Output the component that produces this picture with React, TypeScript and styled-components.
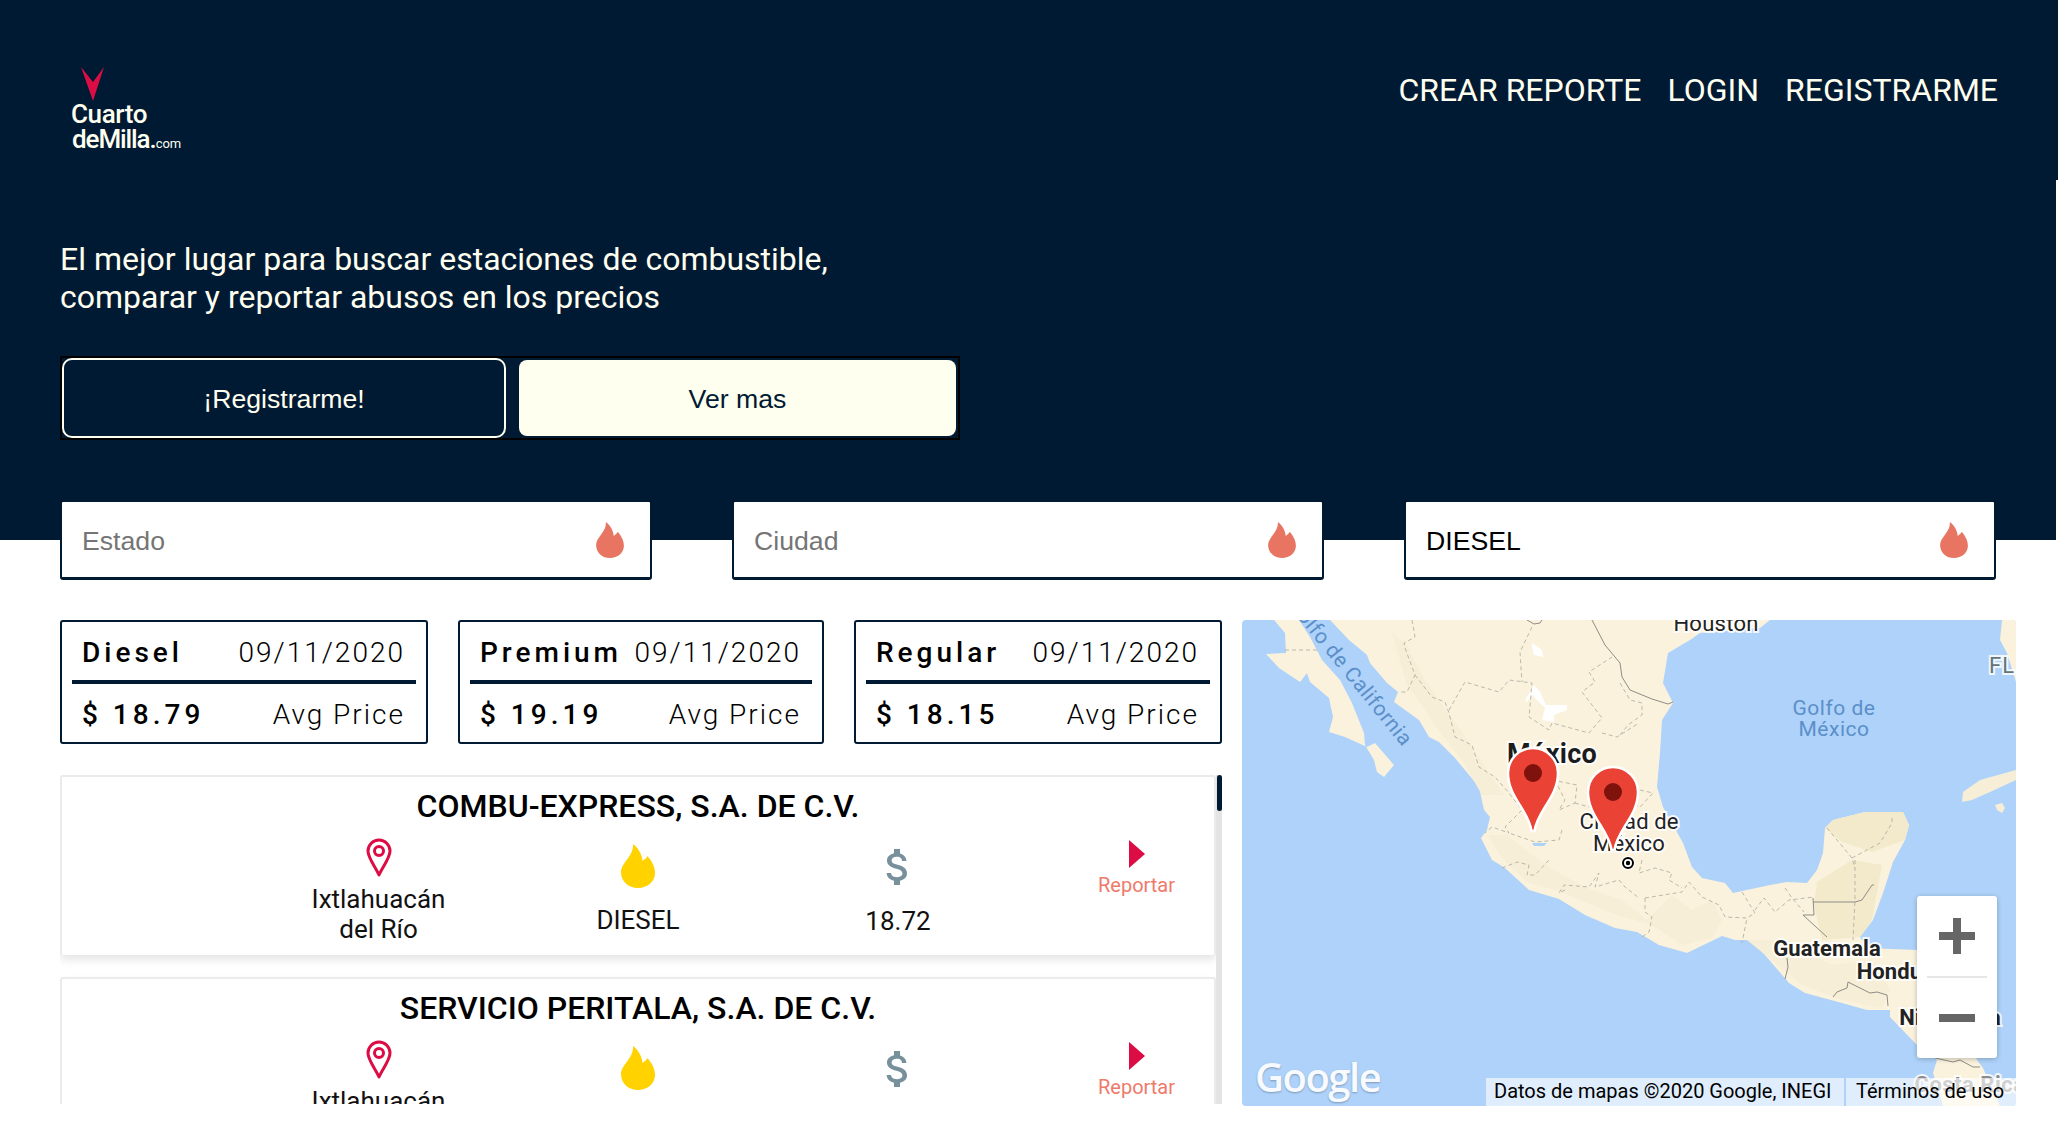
import styled, { createGlobalStyle } from "styled-components";
import { MdAttachMoney } from "react-icons/md";

const NAVY = "#011a33";
const IVORY = "#fffff0";
const CRIMSON = "#dc0d45";

const prices = [
  { name: "Diesel", date: "09/11/2020", price: "$ 18.79" },
  { name: "Premium", date: "09/11/2020", price: "$ 19.19" },
  { name: "Regular", date: "09/11/2020", price: "$ 18.15" },
];

const stations = [
  { name: "COMBU-EXPRESS, S.A. DE C.V.", city: "Ixtlahuacán del Río", fuel: "DIESEL", price: "18.72" },
  { name: "SERVICIO PERITALA, S.A. DE C.V.", city: "Ixtlahuacán del Río", fuel: "DIESEL", price: "18.72" },
];

const mapLabels = [
  { text: "Golfo de California", x: 108, y: 52, size: 21, weight: 400, color: "#5b8fc9", rotate: 51, halo: false, spacing: 0.5 },
  { text: "Houston", x: 474, y: 4, size: 22, weight: 400, color: "#222", rotate: 0, halo: true, spacing: 0.25 },
  { text: "FL", x: 760, y: 46, size: 22, weight: 400, color: "#63757a", rotate: 0, halo: true, spacing: 1 },
  { text: "Golfo de\nMéxico", x: 592, y: 99, size: 21, weight: 400, color: "#5b8fc9", rotate: 0, halo: false, spacing: 0.5 },
  { text: "México", x: 310, y: 134, size: 27, weight: 700, color: "#1c1c1c", rotate: 0, halo: true, spacing: 0.3 },
  { text: "Ciudad de\nMéxico", x: 387, y: 213, size: 22, weight: 400, color: "#222", rotate: 0, halo: true, spacing: 0.1 },
  { text: "Guatemala", x: 585, y: 329, size: 22, weight: 700, color: "#222", rotate: 0, halo: true, spacing: 0.1 },
  { text: "Honduras", x: 663, y: 352, size: 22, weight: 700, color: "#222", rotate: 0, halo: true, spacing: 0.1 },
  { text: "Nicaragua", x: 708, y: 398, size: 22, weight: 700, color: "#222", rotate: 0, halo: true, spacing: 0.1 },
  { text: "Costa Rica", x: 728, y: 465, size: 22, weight: 700, color: "#8a8a8a", rotate: 0, halo: true, spacing: 0.5 },
];

const stateLines = [
  "43,30 77,30",
  "170,0 173,17 162,23 163,28 173,55 165,72 157,72",
  "173,55 190,77 203,82 207,93 213,117 230,125 237,147 253,157 267,173 280,190 263,207 267,213 250,207 243,213",
  "207,90 223,62 257,72 267,60 290,63 287,97 307,110 310,103 347,113 360,98 340,72 353,62 347,52 370,37",
  "290,7 278,32 280,62",
  "313,160 323,180 317,190 333,183 335,165 310,160",
  "360,113 375,117 397,103",
  "333,183 347,187 360,182",
  "320,210 317,220 293,222 267,213",
  "260,248 275,242 287,245 285,255 293,255 307,240",
  "323,270 317,273 322,265 347,267 357,253 353,267 377,260 383,267 397,278",
  "403,278 440,272 447,262 460,277 477,285 483,297 505,298 500,323",
  "403,278 403,292 410,297 407,312 400,317",
  "500,272 513,293 505,298",
  "513,290 522,278 533,292 547,280 572,277",
  "543,268 550,278 562,292",
  "400,240 397,253 413,248 430,253 427,260 440,268",
  "378,63 388,80 400,83 400,95 386,105 378,115",
  "398,170 411,173 398,187 388,183",
  "585,208 610,238 613,248",
  "610,238 638,223 650,203 650,197",
  "613,240 613,280 611,320",
];

const countryLines = [
  "350,0 363,25 378,43 380,57 388,70 410,79 426,84 431,82",
  "285,0 292,4 298,3 300,0",
  "571,278 572,295 561,295 585,317",
  "571,282 613,282 620,280 630,265 632,265",
  "545,338 546,347 543,359",
  "591,377 595,372 605,368 606,362 628,373 635,372 645,375 646,386",
  "693,438 711,442 718,440 731,447 738,447",
];

const Flame = ({ color, width, height }: { color: string; width: number; height: number }) => (
  <svg width={width} height={height} viewBox="0 0 34 44" fill={color}>
    <path d="M12 0C16 3 21 9 21.5 17C23.5 15.5 25.5 14 26.5 12C31 17 34 23 34 29C34 37.5 26.5 44 17 44C7.5 44 0 37.5 0 28C0 19 13 12 12 0Z" />
  </svg>
);

const Pin = () => (
  <svg width="26" height="40" viewBox="0 0 26 40" fill="none" stroke={CRIMSON} strokeWidth="3">
    <path d="M13 37C9 28 2 20 2 13A11 11 0 0 1 24 13C24 20 17 28 13 37Z" strokeLinejoin="round" />
    <circle cx="13" cy="13" r="4.5" />
  </svg>
);

const Marker = ({ x, tip }: { x: number; tip: number }) => (
  <MarkerSvg $x={x} $tip={tip} width="54" height="90" viewBox="-27 -87 54 90">
    <path
      d="M-1.5 0C-4 -20 -25 -34 -25 -58A25 25 0 1 1 25 -58C25 -34 4 -20 1.5 0Z"
      fill="#ea4335"
      stroke="#fff"
      strokeWidth="2.5"
    />
    <circle cx="0" cy="-58" r="9" fill="#7f120d" />
  </MarkerSvg>
);

const MapCanvas = () => (
  <svg width="774" height="486" viewBox="0 0 774 486" style={{ display: "block" }}>
    <g fill="#faf2dc">
      <polygon points="32,0 43,13 44,33 24,34 37,48 58,62 65,53 68,62 87,78 91,97 87,112 103,117 125,127 133,123 152,145 142,157 135,152 132,140 123,125 122,113 110,83 98,60 80,40 68,17 57,0" />
      <polygon points="88,0 107,20 125,35 128,43 145,63 156,72 152,82 177,100 187,117 197,122 213,138 237,167 242,190 248,197 245,210 239,218 250,240 263,248 287,270 317,279 343,295 373,308 395,312 417,325 445,333 480,316 493,320 510,320 547,363 563,373 600,383 625,390 648,390 648,397 675,425 695,440 691,453 701,486 758,486 741,448 735,440 720,400 700,330 675,330 625,328 618,317 631,300 641,273 651,242 663,220 667,205 661,192 623,192 591,200 583,208 581,233 575,250 565,263 545,262 528,265 491,273 483,263 460,258 450,247 441,223 421,187 415,167 418,133 420,100 431,83 421,63 426,33 448,20 458,13 518,8 528,0" />
      <polygon points="760,0 758,20 765,33 774,62 774,0" />
    </g>
    <g fill="#f6eed6">
      <polygon points="150,12 165,25 180,55 200,85 222,115 245,150 262,175 240,175 220,140 200,115 180,85 165,65" />
      <polygon points="245,215 262,240 285,262 320,272 350,285 375,295 410,305 440,325 470,318 480,300 470,280 450,290 430,275 405,300 380,280 350,270 320,255 290,235 265,215" />
      <polygon points="505,320 560,365 600,380 640,388 648,370 630,340 590,345 560,330 530,320" />
      <polygon points="720,182 721,172 738,160 774,150 774,160 748,172 730,180" />
      <polygon points="753,185 760,183 763,188 760,193 755,190" />
    </g>
    <g fill="#f3eacc">
      <polygon points="583,208 591,200 623,192 661,192 667,205 663,220 630,232 600,222" />
      <polygon points="610,240 640,245 630,300 618,317 580,320 572,285 575,262" />
    </g>
    <g fill="#fff">
      <polygon points="290,23 300,30 301,37 292,35 290,27" />
      <polygon points="283,80 292,65 298,72 304,85 325,85 325,90 312,95 312,102 300,100 303,88 290,75 285,82" />
    </g>
    <polygon points="290,223 305,223 302,226 292,226" fill="#aed2f9" />
    <g fill="none" stroke="#aaaaa2" strokeWidth="0.8" strokeDasharray="4 3">
      {stateLines.map((points) => (
        <polyline key={points} points={points} />
      ))}
    </g>
    <g fill="none" stroke="#8d8d87" strokeWidth="1">
      {countryLines.map((points) => (
        <polyline key={points} points={points} />
      ))}
    </g>
    <circle cx="386" cy="243" r="7" fill="#fff" />
    <circle cx="386" cy="243" r="5" fill="#fff" stroke="#000" strokeWidth="2" />
    <circle cx="386" cy="243" r="2.2" fill="#000" />
  </svg>
);

const App = () => {
  return (
    <Page>
      <GlobalStyle />
      <Navbar>
        <Logo>
          <svg width="34" height="35" viewBox="0 0 34 35" fill={CRIMSON}>
            <polygon points="0,0 12,15 23,0 12,34" />
          </svg>
          <LogoLine>Cuarto</LogoLine>
          <LogoLine $tight>
            deMilla.<small>com</small>
          </LogoLine>
        </Logo>
        <NavLinks>
          <NavLink>CREAR REPORTE</NavLink>
          <NavLink>LOGIN</NavLink>
          <NavLink>REGISTRARME</NavLink>
        </NavLinks>
      </Navbar>

      <Hero>
        <Tagline>
          El mejor lugar para buscar estaciones de combustible,
          <br />
          comparar y reportar abusos en los precios
        </Tagline>
        <ButtonGroup>
          <OutlineButton>¡Registrarme!</OutlineButton>
          <SolidButton>Ver mas</SolidButton>
        </ButtonGroup>
      </Hero>

      <FilterRow>
        {[
          { label: "Estado", filled: false },
          { label: "Ciudad", filled: false },
          { label: "DIESEL", filled: true },
        ].map((filter) => (
          <FilterBox key={filter.label}>
            <FilterText $filled={filter.filled}>{filter.label}</FilterText>
            <Flame color="#e87562" width={28} height={36} />
          </FilterBox>
        ))}
      </FilterRow>

      <Content>
        <LeftColumn>
          <PriceRow>
            {prices.map((item) => (
              <PriceCard key={item.name}>
                <PriceLine>
                  <PriceStrong>{item.name}</PriceStrong>
                  <PriceLight>{item.date}</PriceLight>
                </PriceLine>
                <PriceDivider />
                <PriceLine>
                  <PriceStrong>{item.price}</PriceStrong>
                  <PriceLight>Avg Price</PriceLight>
                </PriceLine>
              </PriceCard>
            ))}
          </PriceRow>

          <StationPanel>
            <StationList>
              {stations.map((station) => (
                <StationCard key={station.name}>
                  <StationTitle>{station.name}</StationTitle>
                  <StationGrid>
                    <StationCol>
                      <IconSlot $top={0} $gap={6}>
                        <Pin />
                      </IconSlot>
                      <StationText>{station.city}</StationText>
                    </StationCol>
                    <StationCol>
                      <IconSlot $top={6} $gap={17}>
                        <Flame color="#ffd200" width={34} height={44} />
                      </IconSlot>
                      <StationText>{station.fuel}</StationText>
                    </StationCol>
                    <StationCol>
                      <IconSlot $top={5} $gap={15}>
                        <MdAttachMoney size={48} color="#78909c" />
                      </IconSlot>
                      <StationText>{station.price}</StationText>
                    </StationCol>
                    <ReportCol>
                      <IconSlot $top={2} $gap={5}>
                        <svg width="16" height="28" viewBox="0 0 16 28" fill={CRIMSON}>
                          <polygon points="0,0 16,14 0,28" />
                        </svg>
                      </IconSlot>
                      <ReportText>Reportar</ReportText>
                    </ReportCol>
                  </StationGrid>
                </StationCard>
              ))}
            </StationList>
            <ScrollTrack>
              <ScrollThumb />
            </ScrollTrack>
          </StationPanel>
        </LeftColumn>

        <MapPanel>
          <MapCanvas />
          {mapLabels.map((label) => (
            <MapLabel
              key={label.text}
              $x={label.x}
              $y={label.y}
              $size={label.size}
              $weight={label.weight}
              $color={label.color}
              $rotate={label.rotate}
              $halo={label.halo}
              $spacing={label.spacing}
            >
              {label.text}
            </MapLabel>
          ))}
          <Marker x={291} tip={211} />
          <Marker x={371} tip={230} />
          <GoogleMark>Google</GoogleMark>
          <ZoomControl>
            <ZoomButton>
              <svg width="36" height="36" viewBox="0 0 36 36" fill="#666">
                <rect x="14" y="0" width="8" height="36" />
                <rect x="0" y="14" width="36" height="8" />
              </svg>
            </ZoomButton>
            <ZoomDivider />
            <ZoomButton>
              <svg width="36" height="8" viewBox="0 0 36 8" fill="#666">
                <rect width="36" height="8" />
              </svg>
            </ZoomButton>
          </ZoomControl>
          <Attribution>
            <AttributionItem $width={358} $pad={8}>Datos de mapas ©2020 Google, INEGI</AttributionItem>
            <AttributionItem $width={170} $pad={10}>Términos de uso</AttributionItem>
          </Attribution>
        </MapPanel>
      </Content>
    </Page>
  );
};

export default App;

const GlobalStyle = createGlobalStyle`
  html, body {
    margin: 0;
    padding: 0;
    background: #fff;
    overflow: hidden;
  }
`;

const Page = styled.div`
  width: 2058px;
  height: 1130px;
  overflow: hidden;
  font-family: Roboto, sans-serif;
  background-color: #fff;
`;

const Navbar = styled.header`
  display: flex;
  justify-content: space-between;
  align-items: flex-start;
  box-sizing: border-box;
  height: 180px;
  padding: 67px 60px 0 71px;
  background-color: ${NAVY};
`;

const Logo = styled.div`
  display: flex;
  flex-direction: column;
  color: ${IVORY};
  svg {
    margin-left: 10px;
    display: block;
  }
`;

const LogoLine = styled.div<{ $tight?: boolean }>`
  font-size: 26px;
  font-weight: 500;
  line-height: 24.5px;
  letter-spacing: ${(props) => (props.$tight ? "-1.1px" : "-0.4px")};
  margin-left: ${(props) => (props.$tight ? "1px" : "0")};
  small {
    font-size: 13px;
    font-weight: 400;
    letter-spacing: 0;
  }
`;

const NavLinks = styled.nav`
  display: flex;
  gap: 26px;
  padding-top: 3px;
`;

const NavLink = styled.a`
  font-size: 32px;
  line-height: 40px;
  color: ${IVORY};
`;

const Hero = styled.section`
  box-sizing: border-box;
  height: 360px;
  margin-right: 2px;
  padding: 60px 0 0 60px;
  background-color: ${NAVY};
`;

const Tagline = styled.p`
  margin: 0 0 40px;
  font-size: 32px;
  line-height: 38px;
  color: ${IVORY};
`;

const ButtonGroup = styled.div`
  display: flex;
  align-items: center;
  gap: 13px;
  box-sizing: border-box;
  width: 900px;
  height: 84px;
  border: 2px solid #000;
  font-family: "Liberation Sans", Arial, sans-serif;
  font-size: 26.67px;
`;

const OutlineButton = styled.button`
  box-sizing: border-box;
  width: 444px;
  height: 80px;
  padding-top: 4px;
  border: 2px solid ${IVORY};
  border-radius: 10px;
  background: ${NAVY};
  color: ${IVORY};
  font: inherit;
`;

const SolidButton = styled.button`
  box-sizing: border-box;
  width: 437px;
  height: 76px;
  padding-top: 4px;
  border: none;
  border-radius: 8px;
  background: ${IVORY};
  color: ${NAVY};
  font: inherit;
`;

const FilterRow = styled.div`
  display: grid;
  grid-template-columns: repeat(3, 592px);
  gap: 80px;
  position: relative;
  margin-top: -40px;
  padding-left: 60px;
`;

const FilterBox = styled.div`
  display: flex;
  justify-content: space-between;
  align-items: center;
  box-sizing: border-box;
  height: 80px;
  padding: 0 26px 0 20px;
  background: #fff;
  border: 2px solid ${NAVY};
  border-bottom-width: 3px;
  border-radius: 3px;
`;

const FilterText = styled.span<{ $filled: boolean }>`
  padding-top: 3px;
  font-family: "Liberation Sans", Arial, sans-serif;
  font-size: 26.67px;
  color: ${(props) => (props.$filled ? "#000" : "#757575")};
`;

const Content = styled.main`
  display: grid;
  grid-template-columns: 1162px 774px;
  gap: 20px;
  margin-top: 40px;
  padding-left: 60px;
`;

const LeftColumn = styled.div`
  display: flex;
  flex-direction: column;
  gap: 31px;
`;

const PriceRow = styled.div`
  display: grid;
  grid-template-columns: 368px 366px 368px;
  gap: 30px;
`;

const PriceCard = styled.div`
  box-sizing: border-box;
  height: 124px;
  padding: 0 10px;
  border: 2px solid ${NAVY};
  border-radius: 3px;
`;

const PriceLine = styled.div`
  display: flex;
  justify-content: space-between;
  align-items: center;
  box-sizing: border-box;
  height: 58px;
  padding: 2px 11px 0 10px;
  color: #000;
`;

const PriceDivider = styled.div`
  height: 4px;
  background-color: ${NAVY};
`;

const PriceStrong = styled.span`
  font-size: 28px;
  font-weight: 500;
  letter-spacing: 4px;
`;

const PriceLight = styled.span`
  font-size: 28px;
  font-weight: 300;
  letter-spacing: 2px;
`;

const StationPanel = styled.div`
  display: flex;
  height: 329px;
`;

const StationList = styled.div`
  display: flex;
  flex-direction: column;
  flex: 1;
  gap: 22px;
  overflow: hidden;
`;

const ScrollTrack = styled.div`
  flex: none;
  width: 6px;
  background-color: #e4e4e4;
`;

const ScrollThumb = styled.div`
  width: 5px;
  height: 36px;
  margin-left: 1px;
  background-color: ${NAVY};
  border-radius: 3px;
`;

const StationCard = styled.article`
  box-sizing: border-box;
  height: 180px;
  flex: none;
  padding-top: 11px;
  background: #fff;
  border: 2px solid #ebebeb;
  border-bottom: none;
  border-radius: 3px;
  box-shadow: 0 5px 8px rgba(0, 0, 0, 0.1);
`;

const StationTitle = styled.h2`
  margin: 0;
  font-size: 32px;
  font-weight: 500;
  line-height: 36px;
  text-align: center;
  color: #000;
`;

const StationGrid = styled.div`
  display: grid;
  grid-template-columns: 259px 260px 260px 186px;
  padding: 14px 0 0 187px;
`;

const StationCol = styled.div`
  display: flex;
  flex-direction: column;
  align-items: center;
  text-align: center;
`;

const ReportCol = styled(StationCol)`
  padding-left: 31px;
`;

const IconSlot = styled.div<{ $top: number; $gap: number }>`
  display: flex;
  padding-top: ${(props) => props.$top}px;
  padding-bottom: ${(props) => props.$gap}px;
`;

const StationText = styled.div`
  max-width: 160px;
  font-size: 26px;
  line-height: 30px;
  color: #111;
`;

const ReportText = styled.div`
  font-size: 20px;
  line-height: 24px;
  color: #ef7a6b;
`;

const MapPanel = styled.div`
  position: relative;
  width: 774px;
  height: 486px;
  overflow: hidden;
  border-radius: 4px;
  background-color: #aed2f9;
`;

const MapLabel = styled.span<{
  $x: number;
  $y: number;
  $size: number;
  $weight: number;
  $color: string;
  $rotate: number;
  $halo: boolean;
  $spacing: number;
}>`
  position: absolute;
  left: ${(props) => props.$x}px;
  top: ${(props) => props.$y}px;
  transform: translate(-50%, -50%) rotate(${(props) => props.$rotate}deg);
  font-size: ${(props) => props.$size}px;
  font-weight: ${(props) => props.$weight};
  line-height: ${(props) => props.$size}px;
  letter-spacing: ${(props) => props.$spacing}px;
  white-space: pre;
  text-align: center;
  color: ${(props) => props.$color};
  paint-order: stroke fill;
  -webkit-text-stroke: ${(props) => (props.$halo ? "4px rgba(255, 255, 255, 0.85)" : "0")};
`;

const MarkerSvg = styled.svg<{ $x: number; $tip: number }>`
  position: absolute;
  left: ${(props) => props.$x - 27}px;
  top: ${(props) => props.$tip - 87}px;
`;

const GoogleMark = styled.span`
  position: absolute;
  left: 13px;
  bottom: 2px;
  font-family: "Open Sans", Roboto, sans-serif;
  font-size: 40px;
  font-weight: 600;
  letter-spacing: -1.5px;
  color: #fff;
  opacity: 0.9;
  text-shadow: 0 1px 2px rgba(0, 0, 0, 0.3);
`;

const ZoomControl = styled.div`
  position: absolute;
  left: 675px;
  top: 276px;
  display: flex;
  flex-direction: column;
  align-items: center;
  width: 80px;
  height: 162px;
  background: #fff;
  border-radius: 3px;
  box-shadow: 0 1px 5px rgba(0, 0, 0, 0.25);
`;

const ZoomButton = styled.div`
  display: flex;
  justify-content: center;
  align-items: center;
  flex: 1;
  width: 100%;
`;

const ZoomDivider = styled.div`
  width: 60px;
  height: 2px;
  background-color: #e6e6e6;
`;

const Attribution = styled.div`
  position: absolute;
  right: 0;
  bottom: 0;
  display: flex;
  gap: 2px;
  height: 28px;
`;

const AttributionItem = styled.div<{ $width: number; $pad: number }>`
  box-sizing: border-box;
  width: ${(props) => props.$width}px;
  padding-left: ${(props) => props.$pad}px;
  background: rgba(255, 255, 255, 0.6);
  font-size: 20px;
  line-height: 26px;
  white-space: nowrap;
  color: #000;
`;
